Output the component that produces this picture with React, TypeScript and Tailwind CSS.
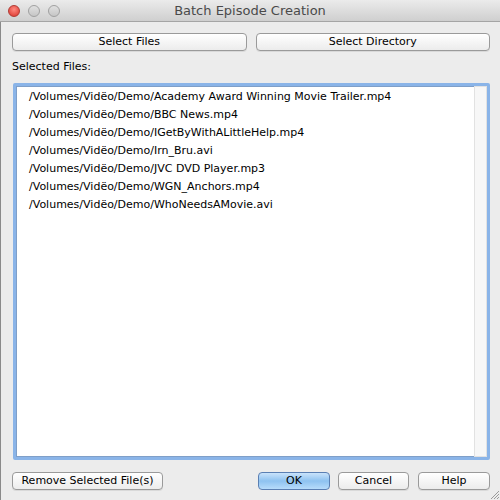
import React from "react";

const files = [
  "/Volumes/Vidëo/Demo/Academy Award Winning Movie Trailer.mp4",
  "/Volumes/Vidëo/Demo/BBC News.mp4",
  "/Volumes/Vidëo/Demo/IGetByWithALittleHelp.mp4",
  "/Volumes/Vidëo/Demo/Irn_Bru.avi",
  "/Volumes/Vidëo/Demo/JVC DVD Player.mp3",
  "/Volumes/Vidëo/Demo/WGN_Anchors.mp4",
  "/Volumes/Vidëo/Demo/WhoNeedsAMovie.avi",
];

function Btn({ children, className = "" }: { children: React.ReactNode; className?: string }) {
  return (
    <div
      className={
        "h-[18px] flex items-center justify-center rounded-[4px] border border-[#9a9a9a] bg-gradient-to-b from-white to-[#ececec] text-[11px] text-black shadow-[0_1px_0_rgba(0,0,0,0.08)] " +
        className
      }
    >
      {children}
    </div>
  );
}

export default function App() {
  return (
    <div
      className="w-[500px] h-[500px] bg-[#ececec] flex flex-col overflow-hidden relative"
      style={{ fontFamily: '"DejaVu Sans", "Lucida Grande", sans-serif' }}
    >
      {/* title bar */}
      <div className="h-[22px] shrink-0 bg-gradient-to-b from-[#ebebeb] to-[#cfcfcf] border-b border-[#a5a5a5] flex items-center relative">
        <div className="flex items-center gap-[8px] pl-[8px]">
          <div className="w-[12px] h-[12px] rounded-full bg-[radial-gradient(circle_at_50%_35%,#ff8a80,#d9322a)] border border-[#b03a33]" />
          <div className="w-[12px] h-[12px] rounded-full bg-gradient-to-b from-[#e0e0e0] to-[#c6c6c6] border border-[#a0a0a0]" />
          <div className="w-[12px] h-[12px] rounded-full bg-gradient-to-b from-[#e0e0e0] to-[#c6c6c6] border border-[#a0a0a0]" />
        </div>
        <div className="absolute inset-0 flex items-center justify-center text-[13px] text-[#4a4a4a] pointer-events-none">
          Batch Episode Creation
        </div>
      </div>

      <div className="flex-1 flex flex-col border-l border-[#8a8a8a] pl-[11px] pr-[10px]">
        {/* top buttons */}
        <div className="flex gap-[9px] mt-[11px]">
          <Btn className="flex-1">Select Files</Btn>
          <Btn className="flex-1">Select Directory</Btn>
        </div>

        <div className="mt-[9px] text-[11px] text-black leading-[14px]">Selected Files:</div>

        {/* list */}
        <div className="mt-[9px] ml-[1px] h-[377px] rounded-[2px] border-[3px] border-[#8ab4e8] flex bg-white">
          <div className="flex-1 border border-[#7f9fc8] border-r-0 flex flex-col pt-[1px] pl-[12px]">
            {files.map((f) => (
              <div key={f} className="h-[18px] flex items-center text-[11px] text-black whitespace-nowrap">
                {f}
              </div>
            ))}
          </div>
          <div className="w-[13px] bg-[#f7f7f7] border-l border-[#e2e2e2] border-y border-[#7f9fc8] border-r" />
        </div>

        {/* bottom buttons */}
        <div className="flex mt-[12px]">
          <Btn className="w-[151px]">Remove Selected File(s)</Btn>
          <div className="flex-1" />
          <div className="h-[18px] w-[72px] flex items-center justify-center rounded-[4px] border border-[#5a7fb3] bg-gradient-to-b from-[#c9e3fb] via-[#8ec2f0] to-[#b7dcfb] text-[11px] text-black">
            OK
          </div>
          <Btn className="w-[71px] ml-[8px]">Cancel</Btn>
          <Btn className="w-[72px] ml-[9px]">Help</Btn>
        </div>
      </div>

      {/* resize grip */}
      <svg className="absolute right-[1px] bottom-[1px]" width="10" height="10" viewBox="0 0 10 10">
        <line x1="2" y1="10" x2="10" y2="2" stroke="#9a9a9a" strokeWidth="1" />
        <line x1="5" y1="10" x2="10" y2="5" stroke="#9a9a9a" strokeWidth="1" />
        <line x1="8" y1="10" x2="10" y2="8" stroke="#9a9a9a" strokeWidth="1" />
      </svg>
    </div>
  );
}
